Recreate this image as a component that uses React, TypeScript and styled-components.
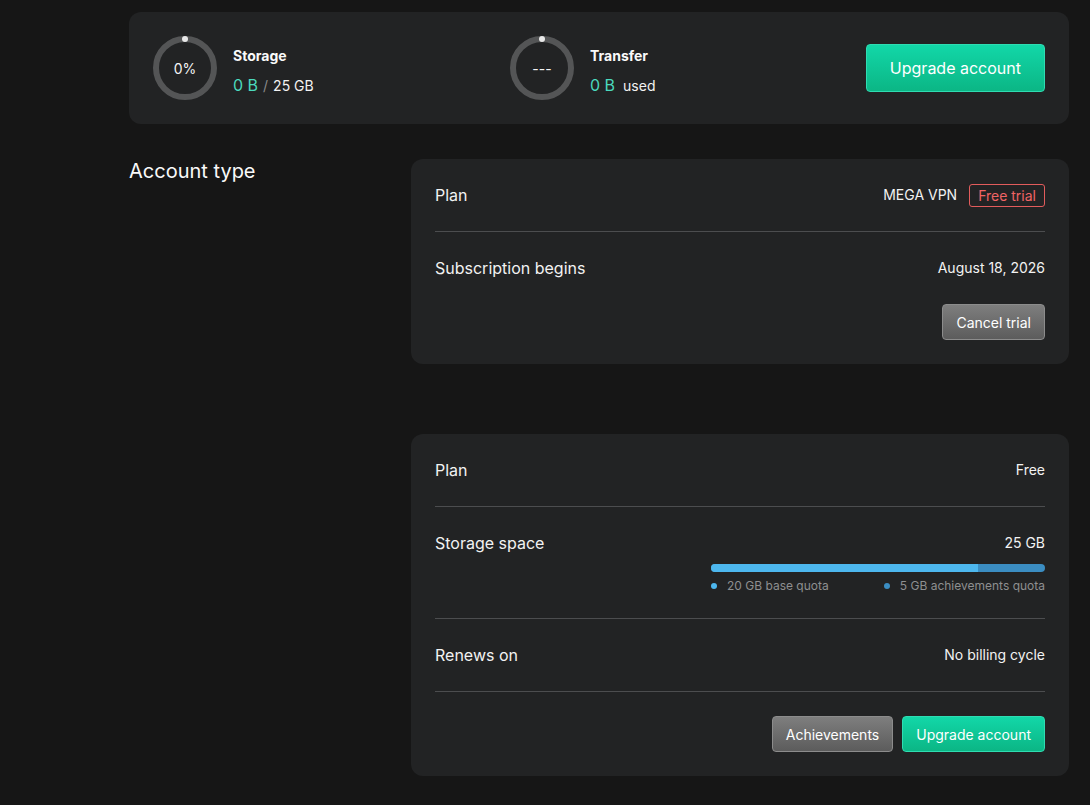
import React from "react";
import styled, { createGlobalStyle } from "styled-components";

const GlobalStyle = createGlobalStyle`
  * { box-sizing: border-box; }
  body {
    margin: 0;
    background: #161616;
    font-family: Inter, "Noto Sans", sans-serif;
    color: #f2f2f2;
  }
`;

const Page = styled.main`
  width: 940px;
  margin-left: 129px;
  padding: 12px 0 30px;
`;

const Card = styled.section`
  background: #222324;
  border-radius: 12px;
`;

const SummaryCard = styled(Card)`
  display: flex;
  align-items: center;
  padding: 24px;
`;

const Stat = styled.div<{ $width?: number }>`
  display: flex;
  align-items: flex-start;
  gap: 16px;
  width: ${(p) => (p.$width ? `${p.$width}px` : "auto")};
`;

const Ring = styled.div`
  position: relative;
  width: 64px;
  height: 64px;
  border-radius: 50%;
  border: 6px solid #545556;
  display: flex;
  align-items: center;
  justify-content: center;
  font-size: 14px;
  color: #f4f4f4;
  flex-shrink: 0;

  &::after {
    content: "";
    position: absolute;
    top: -6px;
    left: 50%;
    width: 6px;
    height: 6px;
    margin-left: -3px;
    border-radius: 50%;
    background: #e8e8e8;
  }
`;

const StatText = styled.div`
  padding-top: 10px;
`;

const StatTitle = styled.div`
  font-size: 14px;
  font-weight: 700;
  line-height: 20px;
  color: #fafafa;
`;

const StatValue = styled.div`
  margin-top: 9px;
  line-height: 20px;
  font-size: 14px;
  display: flex;
  align-items: baseline;
  gap: 5px;
`;

const Teal = styled.span`
  color: #4bd9bd;
  font-size: 16px;
`;

const Slash = styled.span`
  color: #8a8a8a;
`;

const Button = styled.button<{ $variant: "primary" | "secondary"; $large?: boolean }>`
  font-family: Inter, "Noto Sans", sans-serif;
  font-size: ${(p) => (p.$large ? "16px" : "14px")};
  height: ${(p) => (p.$large ? "48px" : "36px")};
  padding: ${(p) => (p.$large ? "0 23px" : "0 13px")};
  color: #fff;
  border-radius: 4px;
  cursor: pointer;
  border: 1px solid
    ${(p) => (p.$variant === "primary" ? "#2fdcb2" : "#8c8c8c")};
  background: ${(p) =>
    p.$variant === "primary"
      ? "linear-gradient(#12d7a8, #0bb685)"
      : "linear-gradient(#7e7e7e, #5c5c5c)"};
`;

const Push = styled.div`
  margin-left: auto;
`;

const Section = styled.div`
  display: grid;
  grid-template-columns: 282px 658px;
  margin-top: 35px;
`;

const SectionTitle = styled.h2`
  margin: 0;
  font-size: 20px;
  font-weight: 400;
  line-height: 24px;
  color: #fafafa;
`;

const Cards = styled.div`
  display: flex;
  flex-direction: column;
  gap: 70px;
`;

const DetailCard = styled(Card)`
  padding: 0 24px;
`;

const Row = styled.div<{ $divider?: boolean; $flush?: boolean }>`
  display: flex;
  justify-content: space-between;
  align-items: flex-start;
  padding: 24px 0 ${(p) => (p.$flush ? 0 : 24)}px;
  border-bottom: ${(p) => (p.$divider ? "1px solid #4c4d4f" : "none")};
`;

const Label = styled.div`
  font-size: 16px;
  line-height: 24px;
`;

const Value = styled.div`
  font-size: 14px;
  line-height: 24px;
  display: flex;
  align-items: center;
  gap: 12px;
`;

const Badge = styled.span`
  border: 1px solid #e25c5c;
  color: #f06464;
  border-radius: 3px;
  padding: 0 8px;
  line-height: 21px;
  font-size: 14px;
`;

const ButtonRow = styled.div`
  display: flex;
  justify-content: flex-end;
  gap: 9px;
  padding: 24px 0;
`;

const Quota = styled.div`
  width: 334px;
  display: flex;
  flex-direction: column;
  align-items: flex-end;
`;

const Bar = styled.div`
  margin-top: 9px;
  width: 100%;
  height: 8px;
  border-radius: 4px;
  overflow: hidden;
  display: flex;
  background: #3b8dc2;
`;

const BarFill = styled.div`
  height: 100%;
  background: #4db7ee;
`;

const Legend = styled.div`
  margin-top: 6px;
  width: 100%;
  display: flex;
  justify-content: space-between;
  font-size: 12px;
  line-height: 16px;
  color: #8e8f90;
`;

const LegendItem = styled.span<{ $color: string }>`
  display: flex;
  align-items: center;
  gap: 10px;

  &::before {
    content: "";
    width: 6px;
    height: 6px;
    border-radius: 50%;
    background: ${(p) => p.$color};
  }
`;

const Used = styled.span`
  margin-left: 3px;
`;

const base = 20;
const total = 25;

export default function App() {
  return (
    <>
      <GlobalStyle />
      <Page>
        <SummaryCard>
          <Stat $width={357}>
            <Ring>0%</Ring>
            <StatText>
              <StatTitle>Storage</StatTitle>
              <StatValue>
                <Teal>0 B</Teal>
                <Slash>/</Slash>
                <span>25 GB</span>
              </StatValue>
            </StatText>
          </Stat>
          <Stat>
            <Ring>---</Ring>
            <StatText>
              <StatTitle>Transfer</StatTitle>
              <StatValue>
                <Teal>0 B</Teal>
                <Used>used</Used>
              </StatValue>
            </StatText>
          </Stat>
          <Push>
            <Button $variant="primary" $large>
              Upgrade account
            </Button>
          </Push>
        </SummaryCard>

        <Section>
          <SectionTitle>Account type</SectionTitle>
          <Cards>
            <DetailCard>
              <Row $divider>
                <Label>Plan</Label>
                <Value>
                  MEGA VPN <Badge>Free trial</Badge>
                </Value>
              </Row>
              <Row $flush>
                <Label>Subscription begins</Label>
                <Value>August 18, 2026</Value>
              </Row>
              <ButtonRow>
                <Button $variant="secondary">Cancel trial</Button>
              </ButtonRow>
            </DetailCard>

            <DetailCard>
              <Row $divider>
                <Label>Plan</Label>
                <Value>Free</Value>
              </Row>
              <Row $divider>
                <Label>Storage space</Label>
                <Quota>
                  <Value>25 GB</Value>
                  <Bar>
                    <BarFill style={{ width: `${(base / total) * 100}%` }} />
                  </Bar>
                  <Legend>
                    <LegendItem $color="#4db7ee">20 GB base quota</LegendItem>
                    <LegendItem $color="#3b8dc2">5 GB achievements quota</LegendItem>
                  </Legend>
                </Quota>
              </Row>
              <Row $divider>
                <Label>Renews on</Label>
                <Value>No billing cycle</Value>
              </Row>
              <ButtonRow>
                <Button $variant="secondary">Achievements</Button>
                <Button $variant="primary">Upgrade account</Button>
              </ButtonRow>
            </DetailCard>
          </Cards>
        </Section>
      </Page>
    </>
  );
}
